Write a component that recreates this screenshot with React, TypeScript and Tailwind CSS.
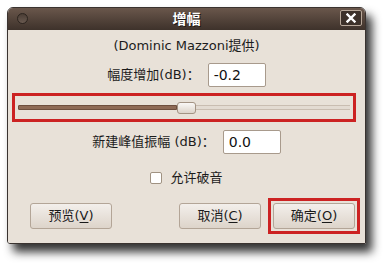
import React from "react";

const font = "font-['DejaVu_Sans','Noto_Sans_CJK_SC',sans-serif]";

function Btn({ label, mnemonic, highlight }: { label: string; mnemonic: string; highlight?: boolean }) {
  const btn = (
    <div className="flex h-[26px] w-[82px] items-center justify-center rounded-[3px] border border-[#b3a597] bg-gradient-to-b from-[#f3efeb] to-[#ddd4ca] text-[13px] text-[#1a1a1a]">
      {label}(<span className="underline underline-offset-2">{mnemonic}</span>)
    </div>
  );
  if (!highlight) return btn;
  return <div className="border-[3px] border-[#cc2222] p-[2px]">{btn}</div>;
}

function Field({ value, width }: { value: string; width: string }) {
  return (
    <div className={`flex h-[24px] ${width} items-center rounded-[2px] border border-[#a89a8c] bg-white px-[5px] text-[14px] text-[#111]`}>
      {value}
    </div>
  );
}

export default function App() {
  return (
    <div className={`h-[267px] w-[390px] bg-white pl-[7px] pt-[7px] ${font}`}>
      <div className="flex h-[237px] w-[359px] flex-col overflow-hidden rounded-t-[6px] rounded-bl-[3px] border border-[#3a3330] shadow-[6px_8px_10px_rgba(0,0,0,0.8)]">
        {/* title bar */}
        <div className="relative flex h-[22px] shrink-0 items-center justify-center bg-gradient-to-b from-[#6a574b] to-[#3e322b]">
          <div className="absolute left-[9px] top-[5px] h-[11px] w-[11px] rounded-full border border-[#2c241f] bg-gradient-to-b from-[#4a3d35] to-[#6a5a50]" />
          <span className="text-[14px] font-bold text-white [text-shadow:1px_1px_0_#201814]">增幅</span>
          <div className="absolute right-[3px] top-[2px] flex h-[16px] w-[22px] items-center justify-center rounded-[2px] border border-[#b8a89a] bg-[#3d312a]">
            <svg width="10" height="10" viewBox="0 0 10 10">
              <path d="M1.5 1.5 L8.5 8.5 M8.5 1.5 L1.5 8.5" stroke="white" strokeWidth="2.4" strokeLinecap="square" />
            </svg>
          </div>
        </div>

        {/* body */}
        <div className="flex flex-1 flex-col bg-[#e8e1d8] text-[13px] text-[#1c1c1c]">
          <div className="mt-[8px] text-center leading-[16px]">(Dominic Mazzoni提供)</div>

          <div className="mt-[9px] flex items-center justify-center gap-[8px]">
            <span>幅度增加(dB)：</span>
            <Field value="-0.2" width="w-[58px]" />
          </div>

          <div className="ml-[4px] mr-[9px] mt-[6px] flex h-[29px] items-center border-[3px] border-[#cc2222] px-[3px]">
            <div className="relative flex h-[12px] flex-1 items-center">
              <div className="h-[5px] w-[159px] rounded-l-[1px] border border-[#6e4f3e] bg-[#8e6a55]" />
              <div className="h-[5px] flex-1 border-y border-[#c9bdb1] bg-[#e3dbd2]" />
              <div className="absolute left-[159px] top-0 h-[12px] w-[19px] rounded-[3px] border border-[#a39383] bg-gradient-to-b from-[#faf8f6] to-[#ddd4ca]" />
            </div>
          </div>

          <div className="mt-[8px] flex items-center justify-center gap-[8px]">
            <span>新建峰值振幅 (dB)：</span>
            <Field value="0.0" width="w-[58px]" />
          </div>

          <div className="mt-[14px] flex items-center justify-center gap-[8px]">
            <div className="h-[12px] w-[12px] rounded-[2px] border border-[#a09282] bg-white" />
            <span>允许破音</span>
          </div>

          <div className="mt-[10px] flex items-center pl-[22px] pr-[5px]">
            <Btn label="预览" mnemonic="V" />
            <div className="flex-1" />
            <Btn label="取消" mnemonic="C" />
            <div className="w-[7px]" />
            <Btn label="确定" mnemonic="O" highlight />
          </div>
        </div>
      </div>
    </div>
  );
}
